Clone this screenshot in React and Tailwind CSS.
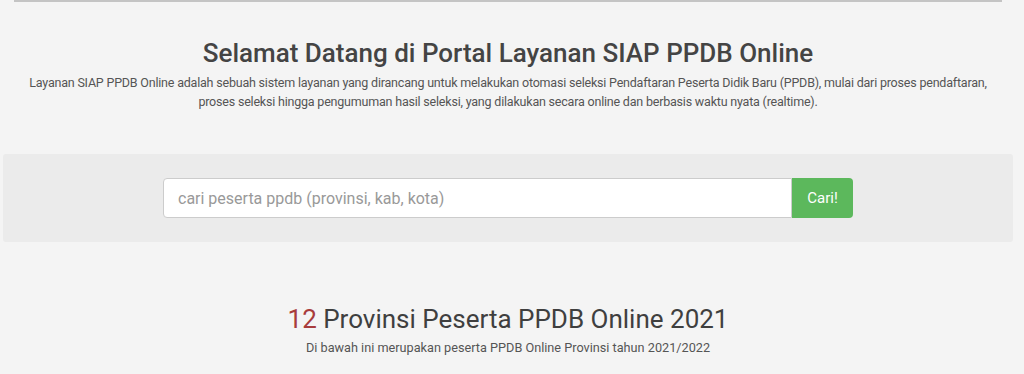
export default function App() {
  return (
    <div className="min-h-[374px] w-full bg-[#f4f4f4] font-['Roboto',sans-serif] text-[#444]">
      <div className="w-[1016px]">
        {/* top divider */}
        <div className="mx-[14px] h-[2px] bg-[#c4c4c4]" />

        {/* intro */}
        <div className="mt-[36px] text-center">
          <h1 className="text-[26px] font-medium leading-[30px] text-[#444]">
            Selamat Datang di Portal Layanan SIAP PPDB Online
          </h1>
          <p className="mx-auto mt-[5px] w-[975px] text-[12.5px] leading-[19px] text-[#555] tracking-[-0.2px]">
            Layanan SIAP PPDB Online adalah sebuah sistem layanan yang dirancang untuk melakukan otomasi seleksi Pendaftaran Peserta Didik Baru (PPDB), mulai dari proses pendaftaran, proses seleksi hingga pengumuman hasil seleksi, yang dilakukan secara online dan berbasis waktu nyata (realtime).
          </p>
        </div>

        {/* search band */}
        <div className="mx-[3px] mt-[43px] flex h-[88px] items-center justify-center rounded-[3px] bg-[#ebebeb]">
          <div className="flex h-[40px] w-[690px]">
            <input
              type="text"
              placeholder="cari peserta ppdb (provinsi, kab, kota)"
              className="h-full flex-1 rounded-l-[4px] border border-[#ccc] bg-white px-[14px] text-[16px] text-[#555] outline-none placeholder:text-[#999]"
            />
            <button className="h-full w-[61px] rounded-r-[4px] bg-[#5cb85c] text-[15px] text-white">
              Cari!
            </button>
          </div>
        </div>

        {/* provinces heading */}
        <div className="mt-[62px] text-center">
          <h2 className="text-[26px] leading-[30px] text-[#3f3f3f]">
            <span className="text-[#a83c3c]">12</span> Provinsi Peserta PPDB Online 2021
          </h2>
          <p className="mt-[6px] text-[12.7px] leading-[16px] text-[#555]">
            Di bawah ini merupakan peserta PPDB Online Provinsi tahun 2021/2022
          </p>
        </div>
      </div>
    </div>
  );
}
